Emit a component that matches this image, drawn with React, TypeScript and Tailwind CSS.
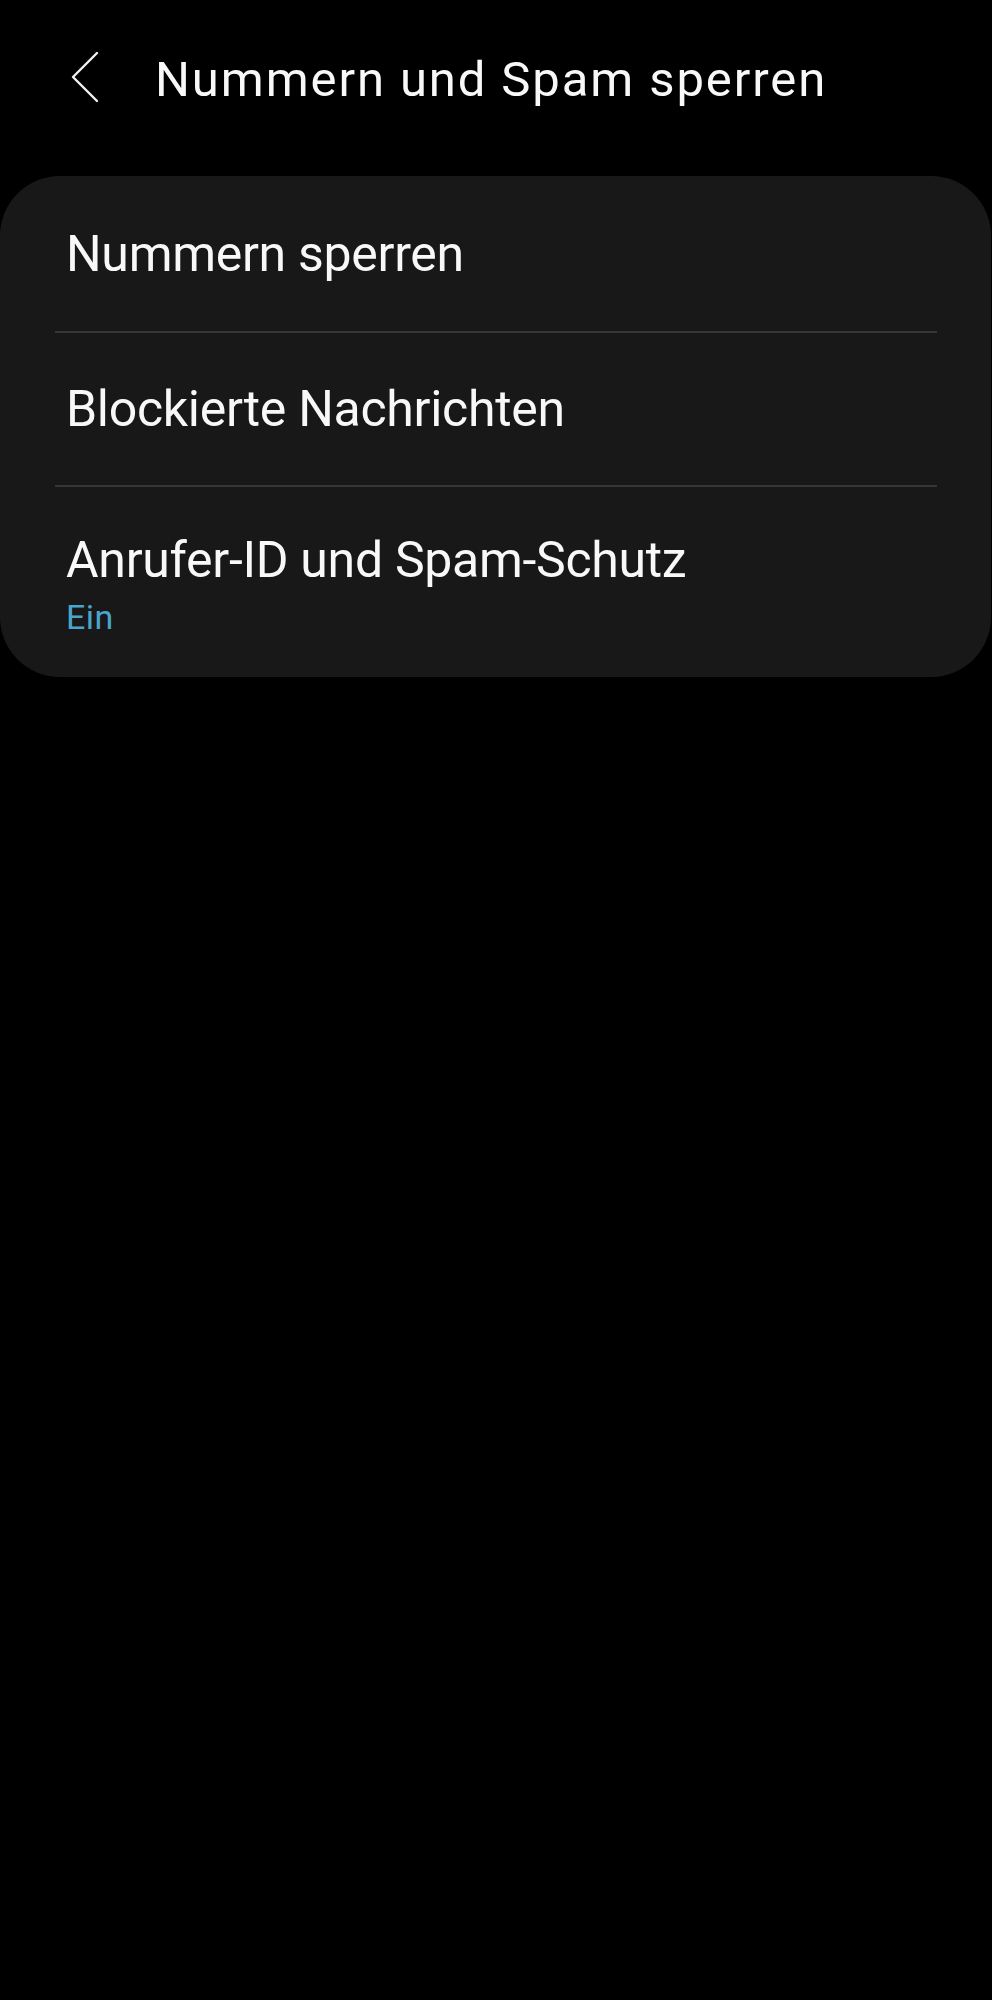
const rows = [
  { title: 'Nummern sperren', h: 'h-[155px]' },
  { title: 'Blockierte Nachrichten', h: 'h-[152px]' },
];

export default function App() {
  return (
    <div
      className="min-h-[2000px] w-[992px] bg-black text-[#f8f8f8]"
      style={{ fontFamily: 'Roboto, "Noto Sans", sans-serif' }}
    >
      {/* header */}
      <div className="flex items-center pt-[52px] h-[108px]">
        <div className="w-[158px] flex items-center">
          <svg
            width="30"
            height="52"
            viewBox="0 0 30 52"
            className="ml-[70px] mt-[-6px]"
            fill="none"
            stroke="#f2f2f2"
            strokeWidth="2.4"
            strokeLinecap="round"
            strokeLinejoin="round"
          >
            <path d="M27 2 L3 26 L27 50" />
          </svg>
        </div>
        <h1 className="text-[49px] leading-[56px] tracking-[1.9px] font-normal -ml-[3px]">
          Nummern und Spam sperren
        </h1>
      </div>

      {/* card */}
      <div className="mt-[68px] w-[991px] rounded-[60px] bg-[#181818] px-[55px]">
        {rows.map((r) => (
          <div key={r.title}>
            <div className={`${r.h} flex items-center pl-[11px]`}>
              <span className="text-[50px] leading-[58px] tracking-[-0.3px]">{r.title}</span>
            </div>
            <div className="h-[2px] bg-[#363636] mr-[-1px]" />
          </div>
        ))}
        <div className="h-[190px] pl-[11px] pt-[44px]">
          <div className="text-[50px] leading-[58px] tracking-[-0.3px]">Anrufer-ID und Spam-Schutz</div>
          <div className="mt-[8px] text-[34px] leading-[40px] tracking-[0.5px] text-[#4aa5cc]">Ein</div>
        </div>
      </div>
    </div>
  );
}
